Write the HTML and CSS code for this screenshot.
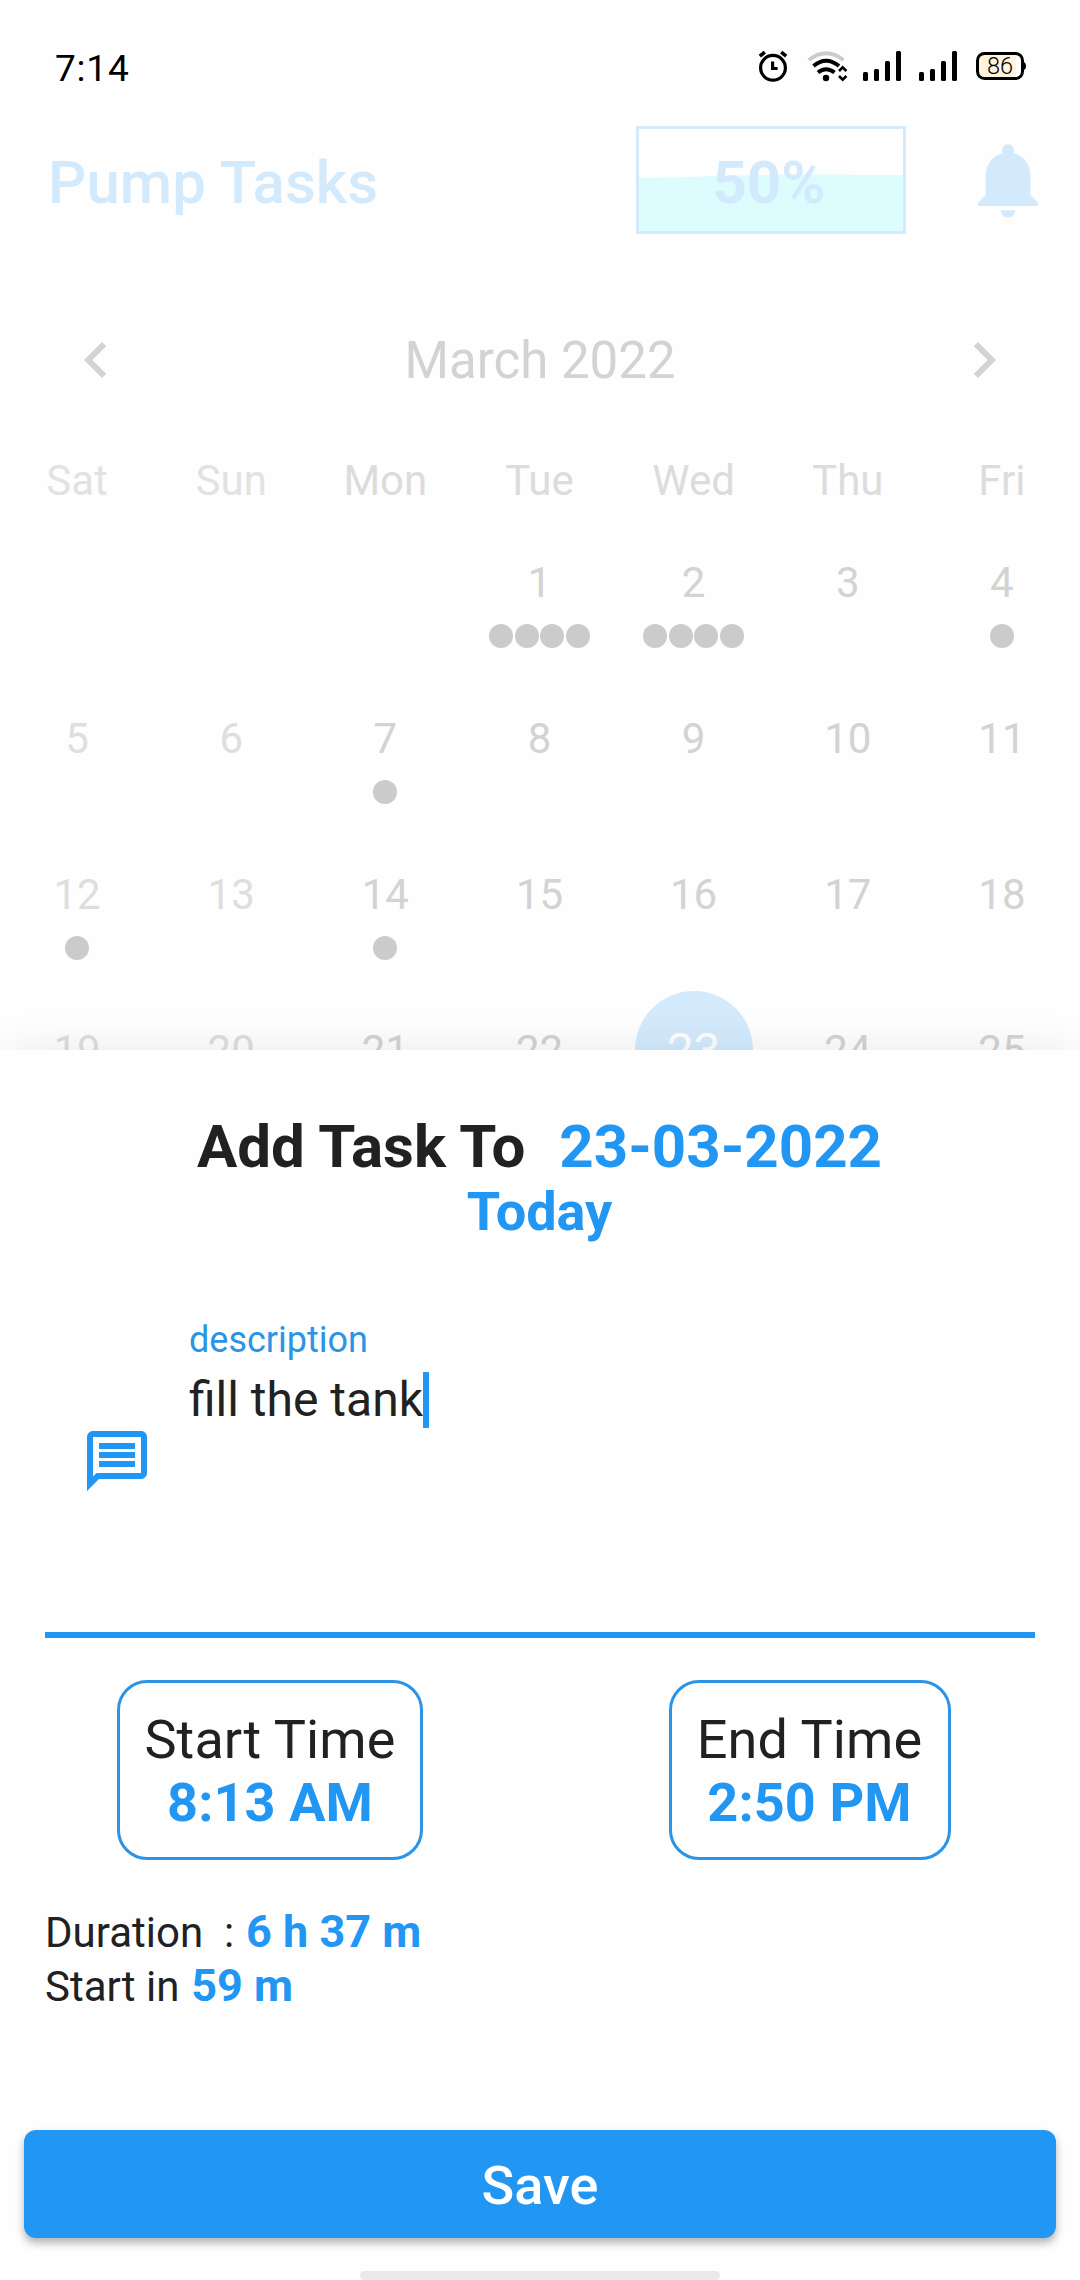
FILE: index.html
```html
<!DOCTYPE html>
<html lang="en">
<head>
<meta charset="utf-8">
<title>Pump Tasks</title>
<link rel="stylesheet" href="styles.css">
</head>
<body>
<div class="screen">
  <div class="status-bar">
    <span class="clock">7:14</span>
    <svg class="status-icons" viewBox="750 42 290 48" width="290" height="48">
      <g fill="none" stroke="#000" stroke-width="3.2">
        <circle cx="773" cy="67.8" r="12.4"/>
        <path d="M772.6 61.5v7h5"/>
        <path d="M759.8 56.2l5-4M786.2 56.2l-5-4" stroke-width="3.6"/>
      </g>
      <g fill="none" stroke-width="4">
        <path d="M808.8 60Q826 46.500 843.500 60" stroke="#cbcbcb"/>
        <path d="M813.500 66Q826 55.500 839 66" stroke="#000"/>
        <path d="M818 72.500Q826 66 834.500 72.500" stroke="#000"/>
      </g>
      <circle cx="826" cy="78" r="3.200"/>
      <path d="M839 71l3.700-3.700 3.700 3.700M839 76l3.700 3.700 3.700-3.700" fill="none" stroke="#000" stroke-width="2.600"/>
      <g>
        <rect x="863" y="72" width="5" height="9" rx="1.500"/><rect x="874" y="69" width="5" height="12" rx="1.500"/><rect x="885" y="61" width="5" height="20" rx="1.500"/><rect x="896" y="51" width="5" height="30" rx="1.500"/>
        <rect x="919" y="72" width="5" height="9" rx="1.500"/><rect x="930" y="69" width="5" height="12" rx="1.500"/><rect x="941" y="61" width="5" height="20" rx="1.500"/><rect x="952" y="51" width="5" height="30" rx="1.500"/>
      </g>
      <path d="M983.500 53.500H1016v25H983.500a6 6 0 0 1-6-6v-13a6 6 0 0 1 6-6z" fill="#fff3dc"/>
      <rect x="977.500" y="53.500" width="45" height="25" rx="7" fill="none" stroke="#000" stroke-width="3"/>
      <path d="M1023 61.500q3 1 3 4.500t-3 4.500z"/>
      <text class="battery-level" x="1000" y="73.500" text-anchor="middle">86</text>
    </svg>
  </div>

  <header class="app-bar">
    <h1 class="app-title">Pump Tasks</h1>
    <div class="tank">
      <svg class="tank-water" viewBox="0 0 264 102" width="264" height="102"><path d="M0 49C60 48 110 45.500 170 45.500L264 46V102H0z" fill="#dcfcfe"/></svg>
      <span class="tank-level">50%</span>
    </div>
    <svg class="bell" viewBox="0 0 60 74" width="60" height="74" fill="#d3eafd"><path d="M24 9.500V6.200a6 6 0 0 1 12 0V9.500C46 12 52.500 21 52.500 32V51L60 58.500V62H0V58.500L7.700 51V32C7.700 21 14 12 24 9.500zM22.600 66.300H37.400a7.400 7.200 0 0 1-14.800 0z"/></svg>
  </header>

  <section class="calendar">
    <div class="month-bar">
      <svg viewBox="0 0 24 24" width="72" height="72" fill="#d3d3d3"><path d="M15.410 7.410L14 6l-6 6 6 6 1.410-1.410L10.830 12z"/></svg>
      <span class="month">March 2022</span>
      <svg viewBox="0 0 24 24" width="72" height="72" fill="#d3d3d3"><path d="M10 6L8.590 7.410 13.170 12l-4.580 4.590L10 18l6-6z"/></svg>
    </div>
    <div class="weekdays">
      <span class="weekend">Sat</span><span class="weekend">Sun</span><span>Mon</span><span>Tue</span><span>Wed</span><span>Thu</span><span>Fri</span>
    </div>
    <div class="days">
      <div class="day"></div><div class="day"></div><div class="day"></div>
      <div class="day">1<div class="dots"><i></i><i></i><i></i><i></i></div></div>
      <div class="day">2<div class="dots"><i></i><i></i><i></i><i></i></div></div>
      <div class="day">3</div>
      <div class="day">4<div class="dots"><i></i></div></div>
      <div class="day off">5</div><div class="day off">6</div>
      <div class="day">7<div class="dots"><i></i></div></div>
      <div class="day">8</div><div class="day">9</div><div class="day">10</div><div class="day">11</div>
      <div class="day off">12<div class="dots"><i></i></div></div>
      <div class="day off">13</div>
      <div class="day">14<div class="dots"><i></i></div></div>
      <div class="day">15</div><div class="day">16</div><div class="day">17</div><div class="day">18</div>
      <div class="day off">19</div><div class="day off">20</div><div class="day">21</div><div class="day">22</div>
      <div class="day"><span class="today">23</span></div>
      <div class="day">24</div><div class="day">25</div>
    </div>
  </section>

  <section class="sheet">
    <div class="sheet-head">
      <div class="sheet-title"><span>Add Task To</span><span class="accent">23-03-2022</span></div>
      <div class="sheet-sub accent">Today</div>
    </div>
    <div class="field">
      <svg class="field-icon" viewBox="0 0 24 24" width="72" height="72" fill="#2196f3"><path d="M4 4h16v12H5.170L4 17.170V4m0-2c-1.100 0-1.990.9-1.990 2L2 22l4-4h14c1.100 0 2-.9 2-2V4c0-1.100-.9-2-2-2H4zm2 10h12v2H6v-2zm0-3h12v2H6V9zm0-3h12v2H6V6z"/></svg>
      <div class="field-body">
        <div class="field-label">description</div>
        <div class="field-value"><span class="field-text">fill the tank</span><span class="caret"></span></div>
      </div>
    </div>
    <div class="times">
      <div class="time-cell"><div class="time-box"><span>Start Time</span><b>8:13 AM</b></div></div>
      <div class="time-cell"><div class="time-box time-box-end"><span>End Time</span><b>2:50 PM</b></div></div>
    </div>
    <div class="summary">
      <div class="summary-row">Duration&nbsp; : <b>6 h 37 m</b></div>
      <div class="summary-row">Start in <b>59 m</b></div>
    </div>
    <button class="save">Save</button>
    <div class="home-handle"></div>
  </section>
</div>
</body>
</html>
```
FILE: styles.css
```css
* { box-sizing: border-box; }
body { margin: 0; font-family: Roboto, "Noto Sans", sans-serif; background: #fefefe; }
.screen { position: relative; width: 1080px; height: 2280px; overflow: hidden; background: #fefefe; }

.status-bar { height: 96px; padding: 42px 40px 6px 55px; display: flex; justify-content: space-between; }
.clock { font-size: 37px; line-height: 54px; letter-spacing: .8px; color: #000; }
.battery-level { font-size: 23.5px; font-weight: 300; }

.app-bar { height: 168px; padding: 0 42px 0 48px; display: flex; align-items: center; color: #d3eafd; }
.app-title { margin: 0; padding-top: 5px; flex: 1; font-size: 60px; font-weight: 500; line-height: 70px; letter-spacing: .1px; }
.tank { width: 270px; height: 108px; border: 3px solid #d3eafd; display: grid; place-items: center; }
.tank-water, .tank-level { grid-area: 1 / 1; }
.tank-level { padding: 6px 4px 0 0; font-size: 60px; font-weight: 700; line-height: 70px; z-index: 1; }
.bell { margin: 2px 0 0 72px; }

.calendar { color: #d3d3d3; }
.month-bar { height: 192px; padding: 0 60px; display: flex; align-items: center; justify-content: space-between; }
.month { font-size: 51px; }
.weekdays { height: 48px; display: grid; grid-template-columns: repeat(7, 1fr); text-align: center; font-size: 42px; line-height: 48px; padding: 1px 1px 0 0; color: #dcdcdc; }
.weekdays .weekend { color: #e2e2e2; }
.days { display: grid; grid-template-columns: repeat(7, 1fr); grid-auto-rows: 156px; padding-right: 1px; font-size: 42px; line-height: 48px; }
.day { display: flex; flex-direction: column; align-items: center; padding-top: 55px; }
.day.off { color: #dedede; }
.dots { display: flex; gap: 1.5px; margin-top: 17px; }
.dots i { width: 24px; height: 24px; border-radius: 50%; background: #cbcbcb; }
.today { width: 118px; height: 118px; margin-top: -36px; border-radius: 50%; background: #d3eafd; color: #fefefe; font-size: 48px; line-height: 119px; text-align: center; }

.sheet { position: absolute; left: 0; right: 0; top: 1050px; bottom: 0; padding: 62px 45px 0; background: #fefefe; color: #212121; box-shadow: 0 -4px 44px -6px rgba(0, 0, 0, .09); }
.accent, .sheet b { color: #2196f3; font-weight: 700; }
.sheet-head { padding-right: 1px; text-align: center; }
.sheet-title { display: flex; justify-content: center; gap: 34px; font-size: 60px; font-weight: 700; line-height: 70px; }
.sheet-sub { margin-top: -2px; font-size: 54px; line-height: 63px; }
.field { height: 348px; margin-top: 47px; border-bottom: 6px solid #2196f3; padding: 0 36px; display: flex; }
.field-icon { margin-top: 135px; }
.field-body { margin: 29px 0 0 36px; }
.field-label { font-size: 36px; line-height: 42px; color: #2b94e6; }
.field-value { display: flex; height: 56px; margin-top: 11px; font-size: 48px; }
.field-text { line-height: 56px; }
.caret { width: 6px; height: 56px; background: #2196f3; }
.times { margin: 42px -45px 0; display: flex; }
.time-cell { flex: 1; display: flex; justify-content: center; }
.time-box { border: 3px solid #2b94e6; border-radius: 30px; padding: 25px 24px 23px; display: flex; flex-direction: column; align-items: center; font-size: 54px; line-height: 63px; letter-spacing: .1px; }
.time-box-end { padding: 25px 26px 23px 25px; }
.summary { margin-top: 45px; }
.summary-row { height: 54px; font-size: 42px; line-height: 54px; white-space: nowrap; }
.summary-row b { margin-left: 1.5px; font-size: 45px; }
.save { display: block; width: 1032px; height: 108px; margin: 117px 0 0 -21px; padding: 3px 0 0; border: 0; border-radius: 12px; background: #2196f3; color: #fff; font: 500 54px/105px Roboto, sans-serif; box-shadow: 0 5px 8px rgba(0, 0, 0, .3); }
.home-handle { width: 360px; height: 9px; margin: 33px auto 0; border-radius: 5px; background: #e9e9e9; }
```
